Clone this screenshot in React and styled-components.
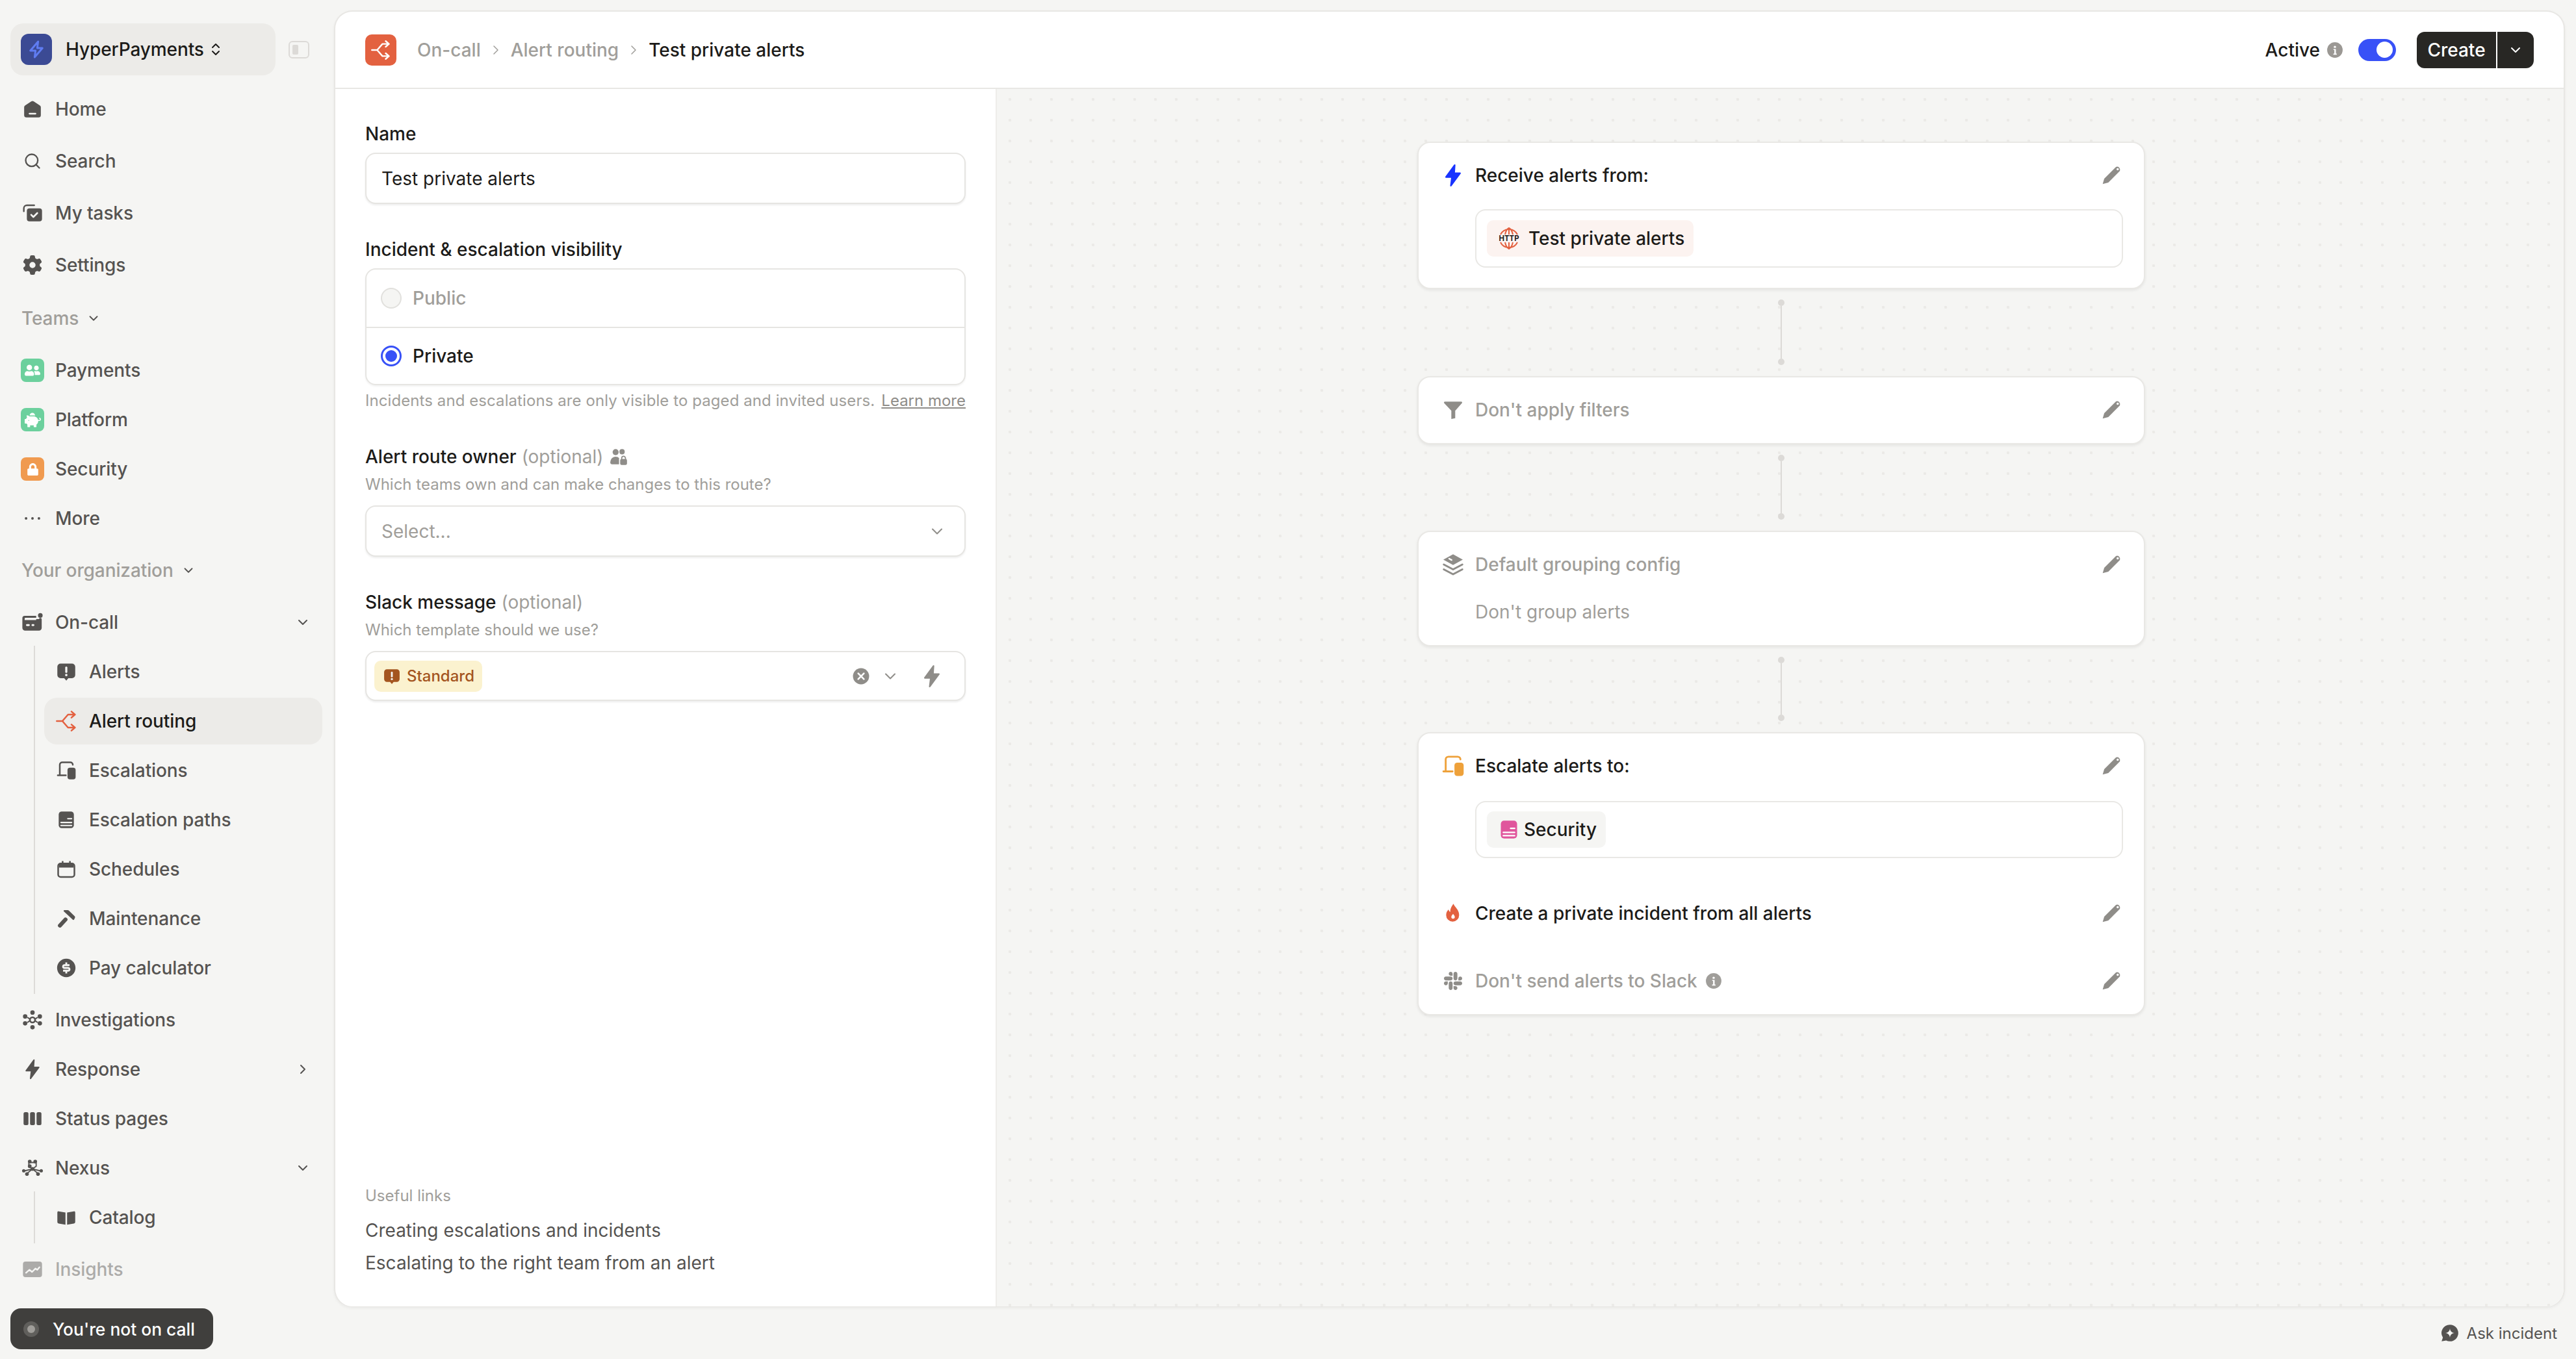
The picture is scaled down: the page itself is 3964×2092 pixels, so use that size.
import styled, { createGlobalStyle } from 'styled-components';
import { ChevronDown, ChevronRight, ChevronsUpDown, Search as SearchGlyph } from 'lucide-react';
import { FaSlack, FaPiggyBank, FaLock, FaUserFriends } from 'react-icons/fa';
import { FaGear } from 'react-icons/fa6';
import { RiMoneyDollarCircleFill } from 'react-icons/ri';

const GlobalStyle = createGlobalStyle`
  html, body {
    margin: 0;
    background: #f5f5f3;
  }
  * {
    box-sizing: border-box;
  }
  body {
    font-family: Inter, "Liberation Sans", sans-serif;
    font-size: 28px;
    color: #1c1b19;
  }
`;

const Shell = styled.div`
  display: flex;
  width: 3964px;
  height: 2092px;
  overflow: hidden;
`;

/* sidebar */
const Sidebar = styled.aside`
  display: flex;
  flex-direction: column;
  flex: 0 0 514px;
  padding: 36px 18px 0 16px;
  letter-spacing: -0.1px;
`;
const WorkspaceRow = styled.div`
  display: flex;
  align-items: center;
  gap: 20px;
  margin-bottom: 14px;
`;
const Workspace = styled.div`
  display: flex;
  align-items: center;
  gap: 6px;
  flex: 0 0 408px;
  height: 80px;
  padding-left: 16px;
  border-radius: 20px;
  background: #ecebe8;
  font-weight: 500;
`;
const WorkspaceLogo = styled.div`
  display: flex;
  align-items: center;
  justify-content: center;
  width: 48px;
  height: 48px;
  margin-right: 15px;
  border-radius: 12px;
  background: #3b4a94;
  color: #5f7cf2;
`;
const CollapseButton = styled.div`
  display: flex;
  width: 32px;
  height: 27px;
  padding: 4px;
  border: 2px solid #dcdad7;
  border-radius: 6px;
  &::before {
    content: '';
    width: 9px;
    background: #dcdad7;
    border-radius: 2px;
  }
`;
const NavRow = styled.div`
  display: flex;
  align-items: center;
  gap: 19px;
  height: 76px;
  margin-top: ${p => p.$top || 0}px;
  padding: 0 18px;
  color: #555351;
  font-weight: 500;
  opacity: ${p => (p.$faded ? 0.45 : 1)};
`;
const NavIcon = styled.span`
  display: flex;
  align-items: center;
  justify-content: center;
  flex: 0 0 32px;
  min-width: 0;
  height: 32px;
  color: ${p => p.$color || '#555351'};
  svg {
    flex: none;
  }
`;
const NavLabel = styled.span`
  flex: 1;
`;
const SectionLabel = styled.div`
  display: flex;
  align-items: center;
  gap: 12px;
  height: 76px;
  margin-top: ${p => p.$top || 4}px;
  padding-left: 17px;
  color: #a09e9a;
  font-weight: 500;
  svg {
    color: #555351;
  }
`;
const TeamBadge = styled.span`
  display: flex;
  align-items: center;
  justify-content: center;
  flex: 0 0 36px;
  width: 36px;
  height: 36px;
  margin: 0 -2px;
  border-radius: 8px;
  background: ${p => p.$color};
  color: #fff;
`;
const SubList = styled.div`
  display: flex;
  flex-direction: column;
  gap: 4px;
  margin: -2px 0 0 36px;
  padding: 4px 0 4px 14px;
  border-left: 2px solid #dddbd8;
`;
const SubRow = styled.div`
  display: flex;
  align-items: center;
  gap: 19px;
  height: 72px;
  padding-left: 18px;
  border-radius: 20px;
  background: ${p => (p.$active ? '#ecebe8' : 'transparent')};
  color: ${p => (p.$active ? '#1c1b19' : '#555351')};
  font-weight: 500;
`;
const OnCallPill = styled.div`
  display: flex;
  align-items: center;
  gap: 21px;
  width: 312px;
  height: 63px;
  margin-top: 22px;
  padding-left: 20px;
  border-radius: 16px;
  background: #403f3d;
  color: #fff;
  font-size: 26.4px;
  letter-spacing: 0;
  font-weight: 500;
`;
const PillDot = styled.span`
  display: flex;
  align-items: center;
  justify-content: center;
  width: 24px;
  height: 24px;
  border-radius: 50%;
  background: #605f5c;
  &::before {
    content: '';
    width: 12px;
    height: 12px;
    border-radius: 50%;
    background: #a09e9a;
  }
`;

/* main panel */
const Content = styled.div`
  display: flex;
  flex-direction: column;
  flex: 0 0 3450px;
`;
const Panel = styled.main`
  display: flex;
  flex-direction: column;
  width: 3433px;
  height: 1996px;
  margin-top: 16px;
  overflow: hidden;
  border: 2px solid #e8e7e4;
  border-bottom-width: 1px;
  border-radius: 28px;
  background: #fff;
  box-shadow: 0 2px 4px rgba(0, 0, 0, 0.05);
`;
const Header = styled.header`
  display: flex;
  align-items: center;
  flex: 0 0 119px;
  padding: 0 46px;
  border-bottom: 2px solid #e8e7e4;
`;
const PageLogo = styled.div`
  display: flex;
  align-items: center;
  justify-content: center;
  width: 48px;
  height: 48px;
  margin-right: 32px;
  border-radius: 10px;
  background: #e36140;
  color: #fff;
`;
const Crumb = styled.span`
  color: ${p => (p.$current ? '#1c1b19' : '#a09e9a')};
  font-weight: 500;
`;
const CrumbSep = styled.span`
  display: flex;
  margin: 0 11px;
  color: #a09e9a;
`;
const HeaderActions = styled.div`
  display: flex;
  align-items: center;
  margin-left: auto;
`;
const ActiveLabel = styled.span`
  margin-right: 10px;
  font-weight: 500;
`;
const ActiveInfo = styled.span`
  display: flex;
  color: #9b9894;
`;
const Toggle = styled.span`
  display: flex;
  align-items: center;
  justify-content: flex-end;
  width: 58px;
  height: 34px;
  margin: 0 32px 0 23px;
  padding: 0 5px;
  border-radius: 17px;
  background: #3851f7;
  &::before {
    content: '';
    width: 25px;
    height: 25px;
    border-radius: 50%;
    background: #fff;
  }
`;
const SplitButton = styled.div`
  display: flex;
  gap: 2px;
  height: 56px;
  color: #fff;
  font-weight: 500;
`;
const CreateButton = styled.div`
  display: flex;
  align-items: center;
  justify-content: center;
  width: 122px;
  border-radius: 12px 0 0 12px;
  background: #282724;
`;
const CaretButton = styled.div`
  display: flex;
  align-items: center;
  justify-content: center;
  width: 56px;
  border-radius: 0 12px 12px 0;
  background: #282724;
`;
const PanelBody = styled.div`
  display: flex;
  flex: 1;
  min-height: 0;
`;

/* form */
const FormColumn = styled.section`
  display: flex;
  flex-direction: column;
  flex: 0 0 1018px;
  padding: 49px 46px 42px 46px;
  border-right: 2px solid #eeedea;
`;
const FieldLabel = styled.div`
  display: flex;
  align-items: center;
  height: 40px;
  margin-top: ${p => p.$top || 0}px;
  font-weight: 500;
`;
const Optional = styled.span`
  margin-left: 8px;
  color: #a09e9a;
  font-weight: 400;
`;
const OwnerIcon = styled.span`
  display: flex;
  margin-left: 10px;
  color: #8f8d89;
`;
const Hint = styled.div`
  margin-top: ${p => p.$top || 7}px;
  color: #a09e9a;
  font-size: 24px;
  line-height: 32px;
  letter-spacing: ${p => (p.$spaced ? '0.08px' : '0')};
  white-space: nowrap;
`;
const LearnMore = styled.span`
  float: right;
  color: #8f8d89;
  letter-spacing: 0;
  text-decoration: underline;
`;
const InputBox = styled.div`
  display: flex;
  align-items: center;
  height: ${p => p.$height || 79}px;
  margin-top: ${p => p.$top || 9}px;
  padding: 0 ${p => p.$right || 28}px 0 ${p => p.$left || 23}px;
  border: 2px solid #e6e5e2;
  border-radius: 16px;
  background: #fff;
  box-shadow: 0 2px 3px rgba(0, 0, 0, 0.07);
  color: ${p => (p.$placeholder ? '#a09e9a' : '#1c1b19')};
`;
const BoxEnd = styled.span`
  display: flex;
  align-items: center;
  margin-left: auto;
  color: #8f8d89;
`;
const RadioGroup = styled.div`
  margin-top: 9px;
  border: 2px solid #e6e5e2;
  border-radius: 16px;
  box-shadow: 0 2px 3px rgba(0, 0, 0, 0.05);
`;
const RadioRow = styled.div`
  display: flex;
  align-items: center;
  gap: 17px;
  height: 88px;
  padding-left: 22px;
  color: ${p => (p.$muted ? '#a09e9a' : '#1c1b19')};
  font-weight: 500;
  & + & {
    border-top: 2px solid #e6e5e2;
  }
`;
const RadioDot = styled.span`
  display: flex;
  align-items: center;
  justify-content: center;
  width: 32px;
  height: 32px;
  border-radius: 50%;
  border: ${p => (p.$on ? '3px solid #3851f7' : '2px solid #e1e0dd')};
  background: ${p => (p.$on ? '#fff' : '#f5f5f3')};
  &::before {
    content: '';
    display: ${p => (p.$on ? 'block' : 'none')};
    width: 18px;
    height: 18px;
    border-radius: 50%;
    background: #3851f7;
  }
`;
const TemplateBadge = styled.span`
  display: flex;
  align-items: center;
  gap: 10px;
  height: 48px;
  padding: 0 12px 0 14px;
  border-radius: 10px;
  background: #fbf2cf;
  color: #a4551f;
  font-size: 24px;
  font-weight: 500;
`;
const ClearIcon = styled.span`
  display: flex;
  color: #8f8d89;
  margin-right: 18px;
`;
const BoltSlot = styled.span`
  display: flex;
  margin-left: 30px;
  color: #8f8d89;
`;
const UsefulLinks = styled.div`
  margin-top: auto;
  line-height: 50px;
  color: #555351;
`;
const UsefulTitle = styled.div`
  margin-bottom: 8px;
  color: #a09e9a;
  font-size: 24px;
  line-height: 40px;
`;

/* canvas */
const Canvas = styled.section`
  display: flex;
  flex-direction: column;
  align-items: center;
  flex: 1;
  padding: 81px 0 0 0;
  background-color: #f5f5f3;
  background-image: radial-gradient(circle at center, #ebeae7 2px, transparent 2.6px);
  background-size: 32px 32px;
  background-position: 4px 0;
`;
const FlowCard = styled.div`
  display: flex;
  flex-direction: column;
  width: 1120px;
  margin-left: 3px;
  padding: 30px 32px 31px 39px;
  border: 2px solid #e9e8e5;
  border-radius: 20px;
  background: #fff;
  box-shadow: 0 2px 4px rgba(0, 0, 0, 0.07);
`;
const CardRow = styled.div`
  display: flex;
  align-items: center;
  gap: 20px;
  height: 40px;
  margin-top: ${p => p.$top || 0}px;
  color: ${p => (p.$muted ? '#a09e9a' : '#1c1b19')};
  font-weight: 500;
`;
const CardIcon = styled.span`
  display: flex;
  align-items: center;
  justify-content: center;
  flex: 0 0 28px;
  min-width: 0;
  height: 36px;
  color: ${p => p.$color || '#8f8d89'};
  svg {
    flex: none;
  }
`;
const CardTitle = styled.span`
  flex: 1;
  display: flex;
  align-items: center;
  gap: 12px;
`;
const EditIcon = styled.span`
  display: flex;
  margin-right: 2px;
  color: #8f8d89;
`;
const CardNote = styled.div`
  margin: 33px 0 0 48px;
  height: 40px;
  line-height: 40px;
  color: #a09e9a;
`;
const ChipBox = styled.div`
  display: flex;
  align-items: center;
  height: ${p => p.$height}px;
  margin: ${p => p.$top}px 0 0 48px;
  padding-left: 16px;
  border: 2px solid #e9e8e5;
  border-radius: 16px;
`;
const Chip = styled.span`
  display: flex;
  align-items: center;
  gap: ${p => p.$gap}px;
  height: 56px;
  padding: 0 14px 0 ${p => p.$left}px;
  border-radius: 10px;
  background: ${p => p.$bg};
  font-weight: 500;
`;
const ChipIcon = styled.span`
  display: flex;
  color: ${p => p.$color};
`;
const Connector = styled.div`
  display: flex;
  flex-direction: column;
  align-items: center;
  height: ${p => p.$height}px;
  margin-left: 3px;
  padding: 16px 0 17px;
`;
const ConnectorDot = styled.span`
  width: 10px;
  height: 10px;
  border-radius: 50%;
  background: #dcdad7;
`;
const ConnectorLine = styled.span`
  flex: 1;
  width: 2px;
  background: #dcdad7;
`;
const PanelFooter = styled.div`
  display: flex;
  align-items: center;
  justify-content: flex-end;
  gap: 12px;
  height: 80px;
  padding-right: 29px;
  color: #555351;
  font-size: 24px;
`;

/* icons */
const Svg = ({ size = 28, children, ...rest }) => (
  <svg width={size} height={size} viewBox="0 0 24 24" fill="currentColor" {...rest}>
    {children}
  </svg>
);

const Bolt = ({ size }) => (
  <Svg size={size}>
    <path
      d="M13.500 2.500 5.500 13.500h5.500L10 21.500l8.500-11.500H13z"
      stroke="currentColor"
      strokeWidth="1.400"
      strokeLinejoin="round"
    />
  </Svg>
);
const OutlineBolt = ({ size }) => (
  <Svg size={size} fill="none">
    <path
      d="M14 3 5 13.500h6L10 21l9-10.500h-6z"
      stroke="currentColor"
      strokeWidth="2.200"
      strokeLinejoin="round"
    />
  </Svg>
);
const Pencil = () => (
  <Svg size={32}>
    <path d="M17.300 2.200a3.600 3.600 0 0 1 4.600 4.600L8.500 20.300 2 22l1.800-6.300Z" />
    <circle cx="19.300" cy="4.800" r="1.300" fill="#fff" />
  </Svg>
);
const Info = ({ size = 26 }) => (
  <Svg size={size}>
    <circle cx="12" cy="12" r="11" />
    <circle cx="12" cy="7.500" r="1.600" fill="#fff" />
    <path d="M10 10.500h3.400v6.500h1.200v1.600H9.800V17h1.400v-4.900H10z" fill="#fff" />
  </Svg>
);
const HomeIcon = () => (
  <Svg>
    <path d="M10.500 1.700 2.700 6.800A3 3 0 0 0 1 9.500V20a3 3 0 0 0 3 3h16a3 3 0 0 0 3-3V9.500a3 3 0 0 0-1.700-2.700l-7.800-5.100a2.700 2.700 0 0 0-3 0Z" />
    <rect x="7" y="17" width="10" height="2" rx="1" fill="#f5f5f3" />
  </Svg>
);
const TasksIcon = () => (
  <Svg size={32}>
    <path
      d="M2 10V6.500A3.500 3.500 0 0 1 5.500 3H14"
      fill="none"
      stroke="currentColor"
      strokeWidth="1.800"
      strokeLinecap="round"
    />
    <rect x="5.500" y="6.500" width="17.500" height="15" rx="3" />
    <path
      d="m10.500 14 2.500 2.500 4.500-4.500"
      fill="none"
      stroke="#f5f5f3"
      strokeWidth="2"
      strokeLinecap="round"
      strokeLinejoin="round"
    />
  </Svg>
);
const OnCallIcon = () => (
  <Svg size={34}>
    <path d="M3.500 5h12.500v2H4.500A1 1 0 0 0 3.500 8v1.500H16v-1H19a1 1 0 0 1 3 .5v9a3 3 0 0 1-3 3H4a3 3 0 0 1-3-3V7.500A2.500 2.500 0 0 1 3.500 5Z" />
    <circle cx="20.500" cy="4.500" r="2.500" />
    <rect x="5" y="14" width="4" height="2" rx="1" fill="#f5f5f3" />
    <rect x="11" y="14" width="3" height="2" rx="1" fill="#f5f5f3" />
  </Svg>
);
const AlertsIcon = ({ size = 30 }) => (
  <Svg size={size}>
    <path d="M5 2h14a4 4 0 0 1 4 4v10a4 4 0 0 1-4 4h-4.500L12 23l-2.500-3H5a4 4 0 0 1-4-4V6a4 4 0 0 1 4-4Z" />
    <rect x="10.700" y="5.500" width="2.600" height="8" rx="1.300" fill="#f5f5f3" />
    <circle cx="12" cy="16" r="1.500" fill="#f5f5f3" />
  </Svg>
);
const RoutingIcon = ({ size = 32 }) => (
  <Svg size={size} fill="none">
    <path
      d="M1 12h6.500L14 4.500h8M7.500 12 14 19.500h8M18 1l4 3.500L18 8M18 16l4 3.500-4 3.500"
      stroke="currentColor"
      strokeWidth="1.900"
      strokeLinecap="round"
      strokeLinejoin="round"
    />
  </Svg>
);
const EscalationIcon = ({ size = 30 }) => (
  <Svg size={size}>
    <path
      d="M4 17V5a3 3 0 0 1 3-3h10a3 3 0 0 1 3 3M1.500 18h10"
      fill="none"
      stroke="currentColor"
      strokeWidth="2"
      strokeLinecap="round"
    />
    <rect x="13.500" y="8.500" width="10" height="14.500" rx="3" />
  </Svg>
);
const PathsIcon = ({ size = 28, line = '#f5f5f3' }) => (
  <Svg size={size}>
    <rect x="2" y="1" width="20" height="22" rx="4" />
    <path d="M14 10.500h5M5 15.500h14M5 19.500h14" stroke={line} strokeWidth="1.800" strokeLinecap="round" />
  </Svg>
);
const CalendarIcon = () => (
  <Svg size={30}>
    <rect x="2" y="5" width="20" height="16.500" rx="3" fill="none" stroke="currentColor" strokeWidth="2" />
    <path d="M3 5h18v5H3zM6.500 2h2v4h-2zM15.500 2h2v4h-2z" />
  </Svg>
);
const HammerIcon = () => (
  <Svg size={30}>
    <path d="M9.500 1.500h4.200c.6 0 1.100.2 1.500.6l7 6.900c.6.6.8 1.400.4 2.200l-1 2c-.3.6-1.100.7-1.600.2L9 3.200c-.5-.5-.2-1.700.5-1.700Z" />
    <path d="M11 13.200 4.200 20.600" stroke="currentColor" strokeWidth="5" strokeLinecap="round" />
  </Svg>
);
const InvestigationsIcon = () => (
  <Svg size={32}>
    <circle cx="12" cy="12" r="3" fill="none" stroke="currentColor" strokeWidth="2" />
    <circle cx="12" cy="3.500" r="2.500" />
    <circle cx="12" cy="20.500" r="2.500" />
    <circle cx="3.500" cy="8" r="2.500" />
    <circle cx="20.500" cy="8" r="2.500" />
    <circle cx="3.500" cy="16" r="2.500" />
    <circle cx="20.500" cy="16" r="2.500" />
    <path d="M6 9l3 2M18 9l-3 2M6 15l3-2M18 15l-3-2" stroke="currentColor" strokeWidth="1.500" />
  </Svg>
);
const StatusIcon = () => (
  <Svg size={30}>
    <rect x="1" y="4" width="6" height="16" rx="2" />
    <rect x="9" y="4" width="6" height="16" rx="2" />
    <rect x="17" y="4" width="6" height="16" rx="2" />
  </Svg>
);
const NexusIcon = () => (
  <Svg size={34}>
    <path
      d="M8 6v4l4 3 4-3V6M12 13l-8 2M12 13l8 2M12 13l-6 5M12 13l6 5M8 6h8"
      fill="none"
      stroke="currentColor"
      strokeWidth="1.300"
    />
    <circle cx="9" cy="5" r="2" />
    <circle cx="15" cy="5" r="2" />
    <circle cx="9" cy="10" r="2" />
    <circle cx="12" cy="13" r="2" />
    <circle cx="2.500" cy="15" r="1.800" />
    <circle cx="21.500" cy="15" r="1.800" />
    <circle cx="6" cy="18.500" r="2" />
    <circle cx="18" cy="18.500" r="2" />
  </Svg>
);
const CatalogIcon = () => (
  <Svg size={30}>
    <path d="M1 6a1.500 1.500 0 0 1 1.700-1.500L11 6v15l-8.300-1.500A2 2 0 0 1 1 17.500z" />
    <path d="M23 6a1.500 1.500 0 0 0-1.700-1.500L13 6v15l8.300-1.500a2 2 0 0 0 1.700-2z" />
  </Svg>
);
const InsightsIcon = () => (
  <Svg size={32}>
    <rect x="1" y="3" width="22" height="18" rx="3" />
    <path
      d="m4.500 16 4-3.500 3 2.500 4-4 2 1.500 2.500-3"
      fill="none"
      stroke="#f5f5f3"
      strokeWidth="1.800"
      strokeLinecap="round"
      strokeLinejoin="round"
    />
  </Svg>
);
const OwnerGlyph = () => (
  <Svg size={28}>
    <circle cx="8" cy="6" r="4" />
    <circle cx="16.500" cy="5.500" r="3.500" />
    <path d="M1 20c0-5 3-8 7-8 2 0 3.500.7 4.500 2v8H3a2 2 0 0 1-2-2Z" />
    <rect x="14" y="15" width="9" height="8" rx="2" />
    <path d="M16 15.500v-1.500a2.500 2.500 0 0 1 5 0v1.500" fill="none" stroke="currentColor" strokeWidth="1.500" />
  </Svg>
);
const ClearGlyph = () => (
  <Svg size={26}>
    <circle cx="12" cy="12" r="11.500" />
    <path d="m8 8 8 8M16 8l-8 8" stroke="#fff" strokeWidth="2.400" strokeLinecap="round" />
  </Svg>
);
const FunnelIcon = () => (
  <Svg size={32}>
    <path d="M2.500 2.500h19a1 1 0 0 1 .8 1.600L14.500 13v8.500l-4.500 1V13L1.700 4.100a1 1 0 0 1 .8-1.600Z" />
  </Svg>
);
const LayersIcon = () => (
  <Svg size={36}>
    <path d="M12 1.500 22 7l-10 5.500L2 7z" />
    <path d="m8 6 2.500 1.400" stroke="#fff" strokeWidth="1.600" strokeLinecap="round" />
    <path
      d="m2.500 12 9.500 5 9.500-5M2.500 17l9.500 5 9.500-5"
      fill="none"
      stroke="currentColor"
      strokeWidth="2"
      strokeLinecap="round"
      strokeLinejoin="round"
    />
  </Svg>
);
const FlameIcon = () => (
  <Svg size={32}>
    <path d="M12.500 1c1 3.500 6.500 6.500 6.500 13a7.500 7.500 0 0 1-15 0c0-3 1.300-5 2.800-6.500.3 1.500 1 2.500 2 3C8.500 7 10.500 3.500 12.500 1Z" />
    <path d="M12 12.500c1.200 1.500 2 2.500 2 3.700a2 2 0 0 1-4 0c0-1.200.8-2.200 2-3.700Z" fill="#fff" />
  </Svg>
);
const HttpIcon = () => (
  <svg width="36" height="36" viewBox="0 0 36 36" fill="none">
    <path
      d="M5 12a14.500 14.500 0 0 1 26 0M5 24a14.500 14.500 0 0 0 26 0M12 12c1-5 3-8.500 6-10 3 1.500 5 5 6 10M12 24c1 5 3 8.500 6 10 3-1.500 5-5 6-10M18 2v10M18 24v10"
      stroke="#e36140"
      strokeWidth="2"
    />
    <text x="18" y="22" textAnchor="middle" fontFamily="Inter, sans-serif" fontSize="12" fontWeight="700" fill="#1c1b19" textLength="31" lengthAdjust="spacingAndGlyphs">
      HTTP
    </text>
  </svg>
);
const AskIcon = () => (
  <Svg size={28}>
    <path d="M12 1a11 11 0 1 1-5 20.800L1 23l1.700-5A11 11 0 0 1 12 1Z" />
    <path d="M12 6c.5 3.500 2 5.500 6 6-4 .5-5.500 2.500-6 6-.5-3.500-2-5.500-6-6 4-.5 5.500-2.500 6-6Z" fill="#f5f5f3" />
  </Svg>
);

const PiggyGlyph = styled(FaPiggyBank)`
  transform: scaleX(-1);
`;

const teamRows = [
  ['Payments', '#6cd09d', <FaUserFriends size={24} />],
  ['Platform', '#6cd09d', <PiggyGlyph size={25} />],
  ['Security', '#f09a4f', <FaLock size={19} />],
];

const onCallRows = [
  ['Alerts', <AlertsIcon />],
  ['Alert routing', <RoutingIcon />, true],
  ['Escalations', <EscalationIcon />],
  ['Escalation paths', <PathsIcon />],
  ['Schedules', <CalendarIcon />],
  ['Maintenance', <HammerIcon />],
  ['Pay calculator', <RiMoneyDollarCircleFill size={34} />],
];

function FlowConnector({ height }) {
  return (
    <Connector $height={height}>
      <ConnectorDot />
      <ConnectorLine />
      <ConnectorDot />
    </Connector>
  );
}

function App() {
  return (
    <Shell>
      <GlobalStyle />
      <Sidebar>
        <WorkspaceRow>
          <Workspace>
            <WorkspaceLogo>
              <OutlineBolt size={32} />
            </WorkspaceLogo>
            HyperPayments
            <ChevronsUpDown size={24} color="#1c1b19" />
          </Workspace>
          <CollapseButton />
        </WorkspaceRow>
        <NavRow>
          <NavIcon><HomeIcon /></NavIcon>
          <NavLabel>Home</NavLabel>
        </NavRow>
        <NavRow $top={4}>
          <NavIcon><SearchGlyph size={28} strokeWidth={2} /></NavIcon>
          <NavLabel>Search</NavLabel>
        </NavRow>
        <NavRow $top={4}>
          <NavIcon><TasksIcon /></NavIcon>
          <NavLabel>My tasks</NavLabel>
        </NavRow>
        <NavRow $top={4}>
          <NavIcon><FaGear size={30} /></NavIcon>
          <NavLabel>Settings</NavLabel>
        </NavRow>
        <SectionLabel $top={6}>
          Teams
          <ChevronDown size={22} />
        </SectionLabel>
        {teamRows.map(([label, color, icon], idx) => (
          <NavRow key={label} $top={idx === 0 ? 4 : 0}>
            <TeamBadge $color={color}>{icon}</TeamBadge>
            <NavLabel>{label}</NavLabel>
          </NavRow>
        ))}
        <NavRow>
          <NavIcon>
            <Svg size={28}>
              <circle cx="3.500" cy="12" r="1.700" />
              <circle cx="12" cy="12" r="1.700" />
              <circle cx="20.500" cy="12" r="1.700" />
            </Svg>
          </NavIcon>
          <NavLabel>More</NavLabel>
        </NavRow>
        <SectionLabel>
          Your organization
          <ChevronDown size={22} />
        </SectionLabel>
        <NavRow $top={4}>
          <NavIcon><OnCallIcon /></NavIcon>
          <NavLabel>On-call</NavLabel>
          <ChevronDown size={24} />
        </NavRow>
        <SubList>
          {onCallRows.map(([label, icon, active]) => (
            <SubRow key={label} $active={active}>
              <NavIcon $color={active ? '#e36140' : undefined}>{icon}</NavIcon>
              {label}
            </SubRow>
          ))}
        </SubList>
        <NavRow $top={2}>
          <NavIcon><InvestigationsIcon /></NavIcon>
          <NavLabel>Investigations</NavLabel>
        </NavRow>
        <NavRow>
          <NavIcon><Bolt size={36} /></NavIcon>
          <NavLabel>Response</NavLabel>
          <ChevronRight size={24} />
        </NavRow>
        <NavRow>
          <NavIcon><StatusIcon /></NavIcon>
          <NavLabel>Status pages</NavLabel>
        </NavRow>
        <NavRow>
          <NavIcon><NexusIcon /></NavIcon>
          <NavLabel>Nexus</NavLabel>
          <ChevronDown size={24} />
        </NavRow>
        <SubList>
          <SubRow>
            <NavIcon><CatalogIcon /></NavIcon>
            Catalog
          </SubRow>
        </SubList>
        <NavRow $top={2} $faded>
          <NavIcon><InsightsIcon /></NavIcon>
          <NavLabel>Insights</NavLabel>
        </NavRow>
        <OnCallPill>
          <PillDot />
          You're not on call
        </OnCallPill>
      </Sidebar>

      <Content>
        <Panel>
          <Header>
            <PageLogo><RoutingIcon size={30} /></PageLogo>
            <Crumb>On-call</Crumb>
            <CrumbSep><ChevronRight size={24} strokeWidth={1.5} /></CrumbSep>
            <Crumb>Alert routing</Crumb>
            <CrumbSep><ChevronRight size={24} strokeWidth={1.5} /></CrumbSep>
            <Crumb $current>Test private alerts</Crumb>
            <HeaderActions>
              <ActiveLabel>Active</ActiveLabel>
              <ActiveInfo><Info /></ActiveInfo>
              <Toggle />
              <SplitButton>
                <CreateButton>Create</CreateButton>
                <CaretButton><ChevronDown size={24} /></CaretButton>
              </SplitButton>
            </HeaderActions>
          </Header>
          <PanelBody>
            <FormColumn>
              <FieldLabel>Name</FieldLabel>
              <InputBox>Test private alerts</InputBox>
              <FieldLabel $top={50}>Incident &amp; escalation visibility</FieldLabel>
              <RadioGroup>
                <RadioRow $muted>
                  <RadioDot />
                  Public
                </RadioRow>
                <RadioRow>
                  <RadioDot $on />
                  Private
                </RadioRow>
              </RadioGroup>
              <Hint $top={8} $spaced>
                Incidents and escalations are only visible to paged and invited users.
                <LearnMore>Learn more</LearnMore>
              </Hint>
              <FieldLabel $top={50}>
                Alert route owner
                <Optional>(optional)</Optional>
                <OwnerIcon><OwnerGlyph /></OwnerIcon>
              </FieldLabel>
              <Hint>Which teams own and can make changes to this route?</Hint>
              <InputBox $top={16} $placeholder>
                Select...
                <BoxEnd><ChevronDown size={28} strokeWidth={1.8} /></BoxEnd>
              </InputBox>
              <FieldLabel $top={50}>
                Slack message
                <Optional>(optional)</Optional>
              </FieldLabel>
              <Hint>Which template should we use?</Hint>
              <InputBox $top={16} $height={77} $left={12} $right={30}>
                <TemplateBadge>
                  <AlertsIcon size={26} />
                  Standard
                </TemplateBadge>
                <BoxEnd>
                  <ClearIcon><ClearGlyph /></ClearIcon>
                  <ChevronDown size={28} strokeWidth={1.8} />
                  <BoltSlot><Bolt size={40} /></BoltSlot>
                </BoxEnd>
              </InputBox>
              <UsefulLinks>
                <UsefulTitle>Useful links</UsefulTitle>
                <div>Creating escalations and incidents</div>
                <div>Escalating to the right team from an alert</div>
              </UsefulLinks>
            </FormColumn>

            <Canvas>
              <FlowCard>
                <CardRow>
                  <CardIcon $color="#1833ff"><Bolt size={40} /></CardIcon>
                  <CardTitle>Receive alerts from:</CardTitle>
                  <EditIcon><Pencil /></EditIcon>
                </CardRow>
                <ChipBox $height={90} $top={32}>
                  <Chip $bg="#fcf3f0" $left={16} $gap={12}>
                    <HttpIcon />
                    Test private alerts
                  </Chip>
                </ChipBox>
              </FlowCard>
              <FlowConnector height={134} />
              <FlowCard>
                <CardRow $muted>
                  <CardIcon><FunnelIcon /></CardIcon>
                  <CardTitle>Don't apply filters</CardTitle>
                  <EditIcon><Pencil /></EditIcon>
                </CardRow>
              </FlowCard>
              <FlowConnector height={133} />
              <FlowCard>
                <CardRow $muted>
                  <CardIcon><LayersIcon /></CardIcon>
                  <CardTitle>Default grouping config</CardTitle>
                  <EditIcon><Pencil /></EditIcon>
                </CardRow>
                <CardNote>Don't group alerts</CardNote>
              </FlowCard>
              <FlowConnector height={132} />
              <FlowCard>
                <CardRow>
                  <CardIcon $color="#eea13a"><EscalationIcon size={34} /></CardIcon>
                  <CardTitle>Escalate alerts to:</CardTitle>
                  <EditIcon><Pencil /></EditIcon>
                </CardRow>
                <ChipBox $height={88} $top={34}>
                  <Chip $bg="#f5f5f3" $left={19} $gap={8}>
                    <ChipIcon $color="#e0559c"><PathsIcon size={30} line="#fff" /></ChipIcon>
                    Security
                  </Chip>
                </ChipBox>
                <CardRow $top={65}>
                  <CardIcon $color="#e36140"><FlameIcon /></CardIcon>
                  <CardTitle>Create a private incident from all alerts</CardTitle>
                  <EditIcon><Pencil /></EditIcon>
                </CardRow>
                <CardRow $top={64} $muted>
                  <CardIcon><FaSlack size={32} /></CardIcon>
                  <CardTitle>
                    Don't send alerts to Slack
                    <Info />
                  </CardTitle>
                  <EditIcon><Pencil /></EditIcon>
                </CardRow>
              </FlowCard>
            </Canvas>
          </PanelBody>
        </Panel>
        <PanelFooter>
          <AskIcon />
          Ask incident
        </PanelFooter>
      </Content>
    </Shell>
  );
}

export default App;
